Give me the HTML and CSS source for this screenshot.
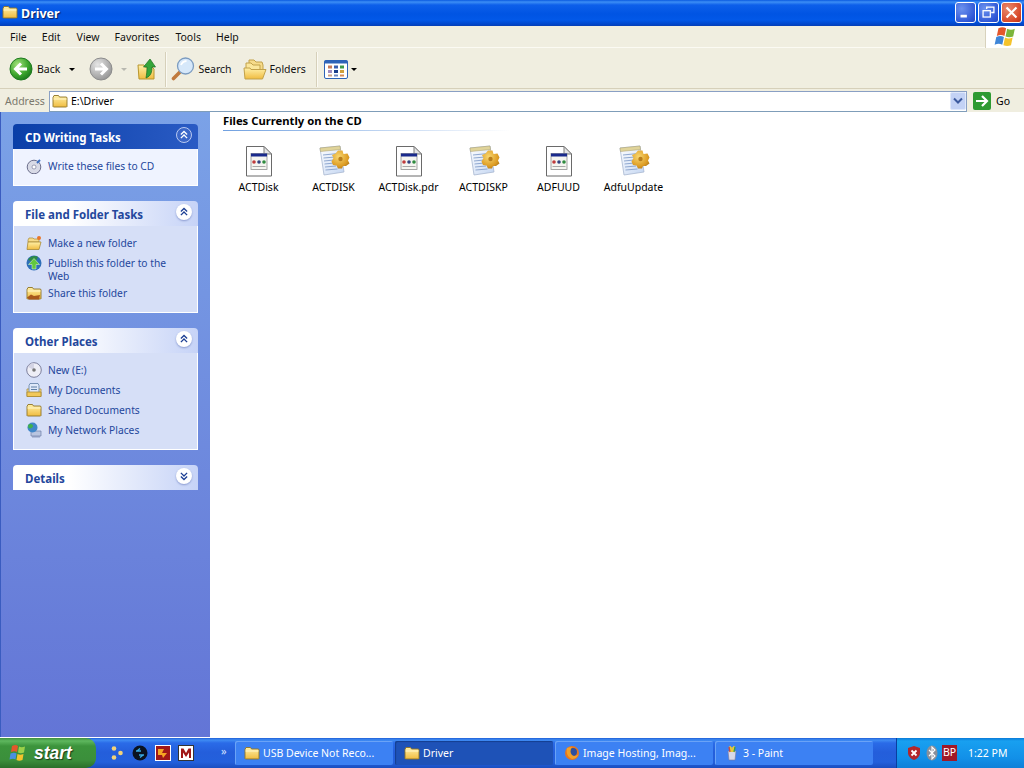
FILE: index.html
```html
<!DOCTYPE html>
<html lang="en">
<head>
<meta charset="utf-8">
<title>Driver</title>
<link rel="stylesheet" href="styles.css">
</head>
<body>
<svg class="defs" width="0" height="0" aria-hidden="true">
  <defs>
    <linearGradient id="gFolder" x1="0" y1="0" x2="0" y2="1"><stop offset="0" stop-color="#fff0a8"/><stop offset="1" stop-color="#f0bc40"/></linearGradient>
    <radialGradient id="gGreen" cx=".35" cy=".3" r=".8"><stop offset="0" stop-color="#a4e27c"/><stop offset=".6" stop-color="#3ba52c"/><stop offset="1" stop-color="#14701a"/></radialGradient>
    <radialGradient id="gGray" cx=".35" cy=".3" r=".8"><stop offset="0" stop-color="#e6e6e6"/><stop offset="1" stop-color="#8f8f8f"/></radialGradient>
    <linearGradient id="gPage" x1="0" y1="0" x2="1" y2="1"><stop offset="0" stop-color="#fff"/><stop offset="1" stop-color="#c4d6f2"/></linearGradient>
    <radialGradient id="gGold" cx=".4" cy=".35" r=".75"><stop offset="0" stop-color="#f8d770"/><stop offset=".7" stop-color="#dd9c24"/><stop offset="1" stop-color="#a8741a"/></radialGradient>
    <symbol id="folder" viewBox="0 0 16 16"><path d="M1 4.500 2 2.500h4.500l1 1.500h7l.5 1V13.500l-.5.500H1.500L1 13.500z" fill="url(#gFolder)" stroke="#8f7426" stroke-width=".9"/><path d="M1.500 6h13" stroke="#fff6c8" stroke-width="1"/></symbol>
    <symbol id="openfolder" viewBox="0 0 24 24"><path d="M6 3h5l2 2h6l1 3v5H6z" fill="#f6db8a" stroke="#c2a24a"/><path d="M3 6h5l2 2h7v5H3z" fill="#fbe79c" stroke="#c2a24a"/><path d="M2 22 1 11h6l1 1.500h15L19.500 22z" fill="url(#gFolder)" stroke="#c2a24a"/></symbol>
    <symbol id="doc" viewBox="0 0 32 32"><path d="M3.500 1.500H21L28.500 9v22h-25z" fill="#fff" stroke="#6a6a6a"/><path d="M21 1.500V9h7.500z" fill="#e4e4e4" stroke="#7d7d7d"/><rect x="8" y="8.500" width="16" height="16" fill="#f5f5f0" stroke="#909090" stroke-width=".8"/><rect x="8" y="8.500" width="16" height="3" fill="#1a2a8c"/><circle cx="11" cy="17" r="1.800" fill="#c03b3b"/><circle cx="16" cy="17" r="1.800" fill="#30407e"/><circle cx="21" cy="17" r="1.800" fill="#2f8b3f"/><path d="M9.500 21.500h13" stroke="#a8a8a8"/></symbol>
    <symbol id="cfg" viewBox="0 0 32 32"><path d="M2 3 22 1l4 26-20 3z" fill="url(#gPage)" stroke="#a8b8d0" stroke-width=".8"/><path d="M2 3 22 1l.5 3.500-20 2z" fill="#e0d49a" stroke="#a89c6a" stroke-width=".5"/><path d="M5 10l15-1.500M5.500 13l12-1M6 16l10-1M6.500 19l10-1M7 22l11-1M7.500 25l12-1" stroke="#8fa8d0"/><path d="M20 5.500h4.500l1 3.500 4-.5 2 4-1.500 3 1.500 3-3.500 2.500-3 0-1 2.500H20l-1.500-3-3.500-.5-1.500-3.500L15.500 13 14 10l3.500-1.500z" fill="url(#gGold)"/><circle cx="22.500" cy="14" r="2.200" fill="#b87e1c"/></symbol>
  </defs>
</svg>

<div class="window">
  <header class="titlebar">
    <svg class="ic16 title-icon"><use href="#folder"/></svg>
    <span class="title-text">Driver</span>
    <div class="winbtns">
      <span class="winbtn"><svg viewBox="0 0 21 21"><rect x="5" y="13" width="7" height="3" fill="#fff"/></svg></span>
      <span class="winbtn"><svg viewBox="0 0 21 21"><path d="M8.500 6.500V4.500h8v6h-3" fill="none" stroke="#fff" stroke-width="1.400"/><rect x="4.500" y="8.500" width="8" height="7" fill="none" stroke="#fff" stroke-width="1.400"/></svg></span>
      <span class="winbtn winbtn-close"><svg viewBox="0 0 21 21"><path d="M5 5l11 11M16 5 5 16" stroke="#fff" stroke-width="2.400"/></svg></span>
    </div>
  </header>

  <nav class="menubar">
    <span class="menu-item">File</span>
    <span class="menu-item">Edit</span>
    <span class="menu-item">View</span>
    <span class="menu-item">Favorites</span>
    <span class="menu-item">Tools</span>
    <span class="menu-item">Help</span>
    <span class="flag-box">
      <svg viewBox="0 0 22 22" width="24" height="24"><path d="M5 3c3-1.500 5-1 7 0l-1.500 7c-2-1-4-1.300-7 0z" fill="#e4572b"/><path d="M13 3.500c2.500 1.200 4.500 1.200 7 0L18.500 10.500c-2.500 1-4.500 1-7 0z" fill="#7cb53c"/><path d="M3 11c3-1.300 5-1 7 0L8.500 18c-2-1-4-1.300-7 0z" fill="#3f86d8"/><path d="M11 11.500c2.500 1.200 4.500 1.200 7 0L16.500 18.500c-2.500 1-4.500 1-7 0z" fill="#f5c32c"/></svg>
    </span>
  </nav>

  <div class="toolbar">
    <span class="tool tool-back">
      <svg class="ic24" viewBox="0 0 24 24"><circle cx="12" cy="12" r="11" fill="url(#gGreen)" stroke="#1e7a20"/><path d="M18 12H8M12 6.500 6.500 12l5.500 5.500" fill="none" stroke="#fff" stroke-width="3"/></svg>
      <span>Back</span>
      <i class="caret caret-back"></i>
    </span>
    <span class="tool tool-forward">
      <svg class="ic24" viewBox="0 0 24 24"><circle cx="12" cy="12" r="11" fill="url(#gGray)" stroke="#8c8c8c"/><path d="M6 12h10M12 6.500l5.500 5.500-5.500 5.500" fill="none" stroke="#fff" stroke-width="3"/></svg>
      <i class="caret caret-off"></i>
    </span>
    <span class="tool tool-up">
      <svg class="ic24" viewBox="0 0 24 24"><path d="M3 8h6l1 2h7l2 2v10H4z" fill="url(#gFolder)" stroke="#b8962e"/><path d="M11 21c5-2 6-6 6-11h3.500L15 2 8.500 10H12c0 4-.5 8-1 11z" fill="#35a63a" stroke="#1d6e22" stroke-width=".7"/></svg>
    </span>
    <i class="sep"></i>
    <span class="tool tool-search">
      <svg class="ic24" viewBox="0 0 24 24"><path d="M9.500 14.500 2.500 21.500" stroke="#c07a3e" stroke-width="3.600" stroke-linecap="round"/><circle cx="14.500" cy="9" r="8" fill="#d6e8fa" stroke="#7c9cc0" stroke-width="1.300"/><path d="M10 8c1-2.500 3-3.800 5.500-4" stroke="#fff" stroke-width="1.800" fill="none"/></svg>
      <span>Search</span>
    </span>
    <span class="tool tool-folders">
      <svg class="ic24" viewBox="0 0 24 24"><use href="#openfolder"/></svg>
      <span>Folders</span>
    </span>
    <i class="sep sep-views"></i>
    <span class="tool tool-views">
      <svg class="ic24" viewBox="0 0 24 24"><rect x=".5" y="3.500" width="23" height="18" rx="1.500" fill="#fff" stroke="#2d63b8"/><rect x=".5" y="3.500" width="23" height="3" fill="#2d63b8"/><path d="M4 8.500h4v3H4z" fill="#c77a5a"/><path d="M10 8.500h4v3h-4z" fill="#3a5fb0"/><path d="M16 8.500h4v3h-4z" fill="#3f9a4a"/><path d="M4 13h4v3H4z" fill="#a08cc0"/><path d="M10 13h4v3h-4z" fill="#1c3f8c"/><path d="M16 13h4v3h-4z" fill="#d0a03a"/><path d="M4 17.500h4v2H4z" fill="#d0a080"/><path d="M10 17.500h4v2h-4z" fill="#7088c0"/><path d="M16 17.500h4v2h-4z" fill="#d88a50"/></svg>
      <i class="caret"></i>
    </span>
  </div>

  <div class="addressbar">
    <span class="address-label">Address</span>
    <div class="address-field">
      <svg class="ic16"><use href="#folder"/></svg>
      <span class="address-value">E:\Driver</span>
      <span class="dropbtn"><svg viewBox="0 0 16 18" width="16" height="18"><path d="M4 6.500 8 10.500 12 6.500" fill="none" stroke="#3c5a9e" stroke-width="2"/></svg></span>
    </div>
    <span class="go">
      <svg viewBox="0 0 18 18" width="18" height="18"><rect width="18" height="18" rx="2" fill="#2e9a32"/><path d="M3 9h10M9 4l5 5-5 5" fill="none" stroke="#fff" stroke-width="2.200"/></svg>
      <span>Go</span>
    </span>
  </div>

  <main class="main">
    <aside class="sidebar">
      <section class="card">
        <h2 class="card-head card-head-primary"><span>CD Writing Tasks</span><i class="chev chev-primary"><svg viewBox="0 0 18 18"><path d="M5.500 8.500 9 5l3.500 3.500M5.500 12.500 9 9l3.500 3.500" fill="none" stroke="currentColor" stroke-width="1.500"/></svg></i></h2>
        <div class="card-body card-body-primary">
          <div class="row"><svg class="ic16" viewBox="0 0 16 16"><circle cx="8" cy="9" r="6.800" fill="#d8dae6" stroke="#6c6f8c"/><circle cx="8" cy="9" r="2" fill="#fff" stroke="#7c7f9c" stroke-width=".7"/><path d="M11 5l3-3" stroke="#3d6fc0" stroke-width="2"/></svg><span class="row-text">Write these files to CD</span></div>
        </div>
      </section>

      <section class="card">
        <h2 class="card-head"><span>File and Folder Tasks</span><i class="chev"><svg viewBox="0 0 18 18"><path d="M5.500 8.500 9 5l3.500 3.500M5.500 12.500 9 9l3.500 3.500" fill="none" stroke="currentColor" stroke-width="1.500"/></svg></i></h2>
        <div class="card-body">
          <div class="row"><svg class="ic16" viewBox="0 0 16 16"><path d="M2 5 3 3h4l1 1h5v3H2z" fill="#f6db8a" stroke="#a98a35" stroke-width=".7"/><path d="M1 14.500 2 7h13l-2 7.500z" fill="url(#gFolder)" stroke="#a98a35" stroke-width=".8"/><circle cx="13" cy="3" r="2" fill="#e8762a"/></svg><span class="row-text">Make a new folder</span></div>
          <div class="row"><svg class="ic16" viewBox="0 0 16 16"><circle cx="8" cy="8" r="7.500" fill="#2e6fb8"/><path d="M2 5c2-4 7-5 10-3l-2 4H5z" fill="#2e8a46"/><path d="M8 3.500l5.500 6H10V14H6V9.500H2.500z" fill="#62c83e" stroke="#e6ffd8" stroke-width=".5"/></svg><span class="row-text">Publish this folder to the Web</span></div>
          <div class="row"><svg class="ic16" viewBox="0 0 16 16"><use href="#folder"/><path d="M1 12.500l4-3 3 1.500 6-1-1 4.500H3z" fill="#a8581c"/></svg><span class="row-text">Share this folder</span></div>
        </div>
      </section>

      <section class="card">
        <h2 class="card-head"><span>Other Places</span><i class="chev"><svg viewBox="0 0 18 18"><path d="M5.500 8.500 9 5l3.500 3.500M5.500 12.500 9 9l3.500 3.500" fill="none" stroke="currentColor" stroke-width="1.500"/></svg></i></h2>
        <div class="card-body">
          <div class="row"><svg class="ic16" viewBox="0 0 16 16"><circle cx="8" cy="8" r="7.300" fill="#eeeef6" stroke="#7c7f9c"/><path d="M8 8 2 5a7 7 0 0 1 6-4z" fill="#d4d4e4"/><circle cx="8" cy="8" r="1.800" fill="#777"/></svg><span class="row-text">New (E:)</span></div>
          <div class="row"><svg class="ic16" viewBox="0 0 16 16"><path d="M1 7h14v7.500H1z" fill="url(#gFolder)" stroke="#a98a35" stroke-width=".8"/><path d="M4 1.500h8l1 2v8H3v-8z" fill="#dfe8f8" stroke="#5f7fa5" stroke-width=".8"/><path d="M5 5h6M5 7.500h6" stroke="#5f7fa5"/><path d="M1 10h14v4.500H1z" fill="#f2c858" stroke="#a98a35" stroke-width=".8"/></svg><span class="row-text">My Documents</span></div>
          <div class="row"><svg class="ic16"><use href="#folder"/></svg><span class="row-text">Shared Documents</span></div>
          <div class="row"><svg class="ic16" viewBox="0 0 16 16"><path d="M5 9h10v5H5z" fill="#b9c5e0" stroke="#6f7ea8" stroke-width=".7"/><path d="M6 14h8v1.500H6z" fill="#8f9cc0"/><circle cx="6.500" cy="5.500" r="5" fill="#3f86c8"/><path d="M2 3c2-2 5-1 5 1S4 7 2.500 6z" fill="#3fb04a"/></svg><span class="row-text">My Network Places</span></div>
        </div>
      </section>

      <section class="card">
        <h2 class="card-head"><span>Details</span><i class="chev"><svg viewBox="0 0 18 18"><path d="M5.500 5.500 9 9l3.500-3.500M5.500 9.500 9 13l3.500-3.500" fill="none" stroke="currentColor" stroke-width="1.500"/></svg></i></h2>
      </section>
    </aside>

    <section class="content">
      <h3 class="group-title">Files Currently on the CD</h3>
      <div class="files">
        <div class="file"><svg class="ic32"><use href="#doc"/></svg><span>ACTDisk</span></div>
        <div class="file"><svg class="ic32"><use href="#cfg"/></svg><span>ACTDISK</span></div>
        <div class="file"><svg class="ic32"><use href="#doc"/></svg><span>ACTDisk.pdr</span></div>
        <div class="file"><svg class="ic32"><use href="#cfg"/></svg><span>ACTDISKP</span></div>
        <div class="file"><svg class="ic32"><use href="#doc"/></svg><span>ADFUUD</span></div>
        <div class="file"><svg class="ic32"><use href="#cfg"/></svg><span>AdfuUpdate</span></div>
      </div>
    </section>
  </main>

  <footer class="taskbar">
    <span class="start">
      <svg viewBox="0 0 20 20" width="20" height="20"><path d="M3 3c3-1.500 4.500-1 6 0L8 9c-1.500-1-3-1.300-6 0z" fill="#e4572b"/><path d="M10 3.500c2 1 3.500 1 6 0L15 9.500c-2.500 1-4 1-6 0z" fill="#9bd04a"/><path d="M1.500 10.500c3-1.300 4.500-1 6 0l-1 6c-1.500-1-3-1.300-6 0z" fill="#4a90e0"/><path d="M8.500 11c2 1 3.500 1 6 0l-1 6c-2.500 1-4 1-6 0z" fill="#f5c32c"/></svg>
      <span class="start-text">start</span>
    </span>
    <div class="quick">
      <svg viewBox="0 0 16 16" width="16" height="16"><circle cx="5" cy="3.500" r="2.300" fill="#f2d27a"/><circle cx="11.500" cy="8" r="2.300" fill="#f2d27a"/><circle cx="5" cy="12.500" r="2.300" fill="#f2d27a"/></svg>
      <svg viewBox="0 0 16 16" width="16" height="16"><circle cx="8" cy="8" r="7.500" fill="#0a1220"/><path d="M4 6h5M7 10h5M8 3.500 5 6M8 12.500l3-2.500" stroke="#38a8e0" stroke-width="1.400" fill="none"/></svg>
      <svg viewBox="0 0 16 16" width="16" height="16"><rect x=".5" y=".5" width="15" height="15" fill="#a01818" stroke="#fff"/><path d="M3 4h6l-2 4h5l-4 5-1-3H3z" fill="#f5a623"/></svg>
      <svg viewBox="0 0 16 16" width="16" height="16"><rect x=".5" y=".5" width="15" height="15" fill="#fff" stroke="#333"/><path d="M3 13V3.500h2.500L8 8l2.500-4.500H13V13h-2V7.500L8 12 5 7.500V13z" fill="#a01818"/></svg>
      <span class="more">»</span>
    </div>
    <div class="tasks">
      <span class="task"><svg class="ic16"><use href="#folder"/></svg><span>USB Device Not Reco...</span></span>
      <span class="task task-active"><svg class="ic16"><use href="#folder"/></svg><span>Driver</span></span>
      <span class="task"><svg class="ic16" viewBox="0 0 16 16"><circle cx="8" cy="8" r="7" fill="#e8761e"/><circle cx="9" cy="7" r="4" fill="#2d4f9e"/><path d="M3 3c-1 4 0 9 5 11 4 0 6-3 7-6-1 3-5 4-7 2S6 5 8 2C6 2 4 3 3 3z" fill="#f2a12a"/></svg><span>Image Hosting, Imag...</span></span>
      <span class="task"><svg class="ic16" viewBox="0 0 16 16"><path d="M4 6h8l-1 9H5z" fill="#d9d9e8" stroke="#7a7a9a" stroke-width=".6"/><path d="M6 1l1 6M10 1 9 7M8 2v5" stroke-width="1.500" stroke="#e8c83a"/><path d="M5 2l1 5" stroke="#d04a3a" stroke-width="1.300"/><path d="M11 2l-1 5" stroke="#3aa04a" stroke-width="1.300"/></svg><span>3 - Paint</span></span>
    </div>
    <div class="tray">
      <svg viewBox="0 0 16 16" width="16" height="16"><path d="M8 1l6 2v5c0 3-3 6-6 7-3-1-6-4-6-7V3z" fill="#b3262c"/><path d="M5.500 5.500l5 5M10.500 5.500l-5 5" stroke="#fff" stroke-width="1.800"/></svg>
      <svg viewBox="0 0 12 16" width="12" height="16"><ellipse cx="6" cy="8" rx="5.500" ry="7.500" fill="#8a8f9a"/><path d="M3 5l6 6-3 3V2l3 3-6 6" fill="none" stroke="#fff" stroke-width="1.100"/></svg>
      <span class="bp">BP</span>
      <span class="clock">1:22 PM</span>
    </div>
  </footer>
</div>
</body>
</html>
```
FILE: styles.css
```css
* { box-sizing: border-box; }
html, body { margin: 0; padding: 0; }
body { width: 1024px; height: 768px; overflow: hidden; font-family: "Noto Sans", "DejaVu Sans", sans-serif; font-size: 10.5px; line-height: 13px; color: #000; }
.defs { position: absolute; }
svg { display: block; flex: none; }
i { font-style: normal; }
.ic16 { width: 16px; height: 16px; }
.ic24 { width: 24px; height: 24px; }
.ic32 { width: 32px; height: 32px; }

.window { width: 1024px; height: 768px; display: flex; flex-direction: column; }

.titlebar { height: 26px; display: flex; align-items: center; padding: 1px 2px 0 2px; color: #fff; background: linear-gradient(to bottom, #0a5ae0 0, #3c8ef5 2px, #0d5fea 5px, #0054e3 14px, #0258e8 20px, #0143c4 25px, #0a3fb0 26px); }
.title-icon { margin-top: -4px; }
.title-text { margin-left: 3px; font-size: 12.5px; font-weight: 700; text-shadow: 1px 1px 1px #0f1f5f; }
.winbtns { margin-left: auto; margin-top: -2px; display: flex; gap: 2px; }
.winbtn { width: 21px; height: 21px; border: 1px solid #fff; border-radius: 3px; background: radial-gradient(circle at 30% 30%, #6c92ee, #2e56d6 75%, #2347c0); }
.winbtn svg { width: 19px; height: 19px; }
.winbtn-close { background: radial-gradient(circle at 30% 30%, #e88a6e, #d8492a 70%, #b8321a); }

.menubar { height: 22px; display: flex; align-items: center; padding: 2px 0 0 4px; background: #f0eee0; border-bottom: 1px solid #fbfaf3; }
.menu-item { padding: 0 6px; margin-right: 3px; color: #111; }
.menu-item:nth-child(2) { margin-right: 4px; }
.menu-item:nth-child(4) { margin-right: 4px; }
.flag-box { margin-left: auto; margin-top: -2px; width: 39px; height: 22px; display: flex; align-items: center; justify-content: center; background: #fff; border-left: 1px solid #d8d2bd; }

.toolbar { height: 41px; display: flex; align-items: center; padding: 2px 0 0 9px; background: #f0eee0; border-bottom: 1px solid #d6d0ba; }
.tool { display: flex; align-items: center; color: #111; }
.tool-back span { margin-left: 4px; }
.caret { width: 0; height: 0; border-left: 3px solid transparent; border-right: 3px solid transparent; border-top: 3px solid #000; }
.caret-back { margin-left: 9px; }
.caret-off { margin-left: 8px; border-top-color: #b8b8b0; }
.tool-forward { margin-left: 14px; }
.tool-up { margin-left: 8px; }
.sep { height: 35px; margin-left: 6px; background: #d6d0ba; border-right: 1px solid #fbfaf3; width: 2px; }
.tool-search { margin-left: 4px; }
.tool-search span, .tool-folders span { margin-left: 3px; }
.tool-folders { margin-left: 11px; }
.sep-views { margin-left: 10px; }
.tool-views { margin-left: 6px; }
.tool-views .caret { margin-left: 3px; }

.addressbar { height: 23px; display: flex; align-items: center; padding: 1px 0 0 5px; background: #f0eee0; }
.address-label { width: 44px; color: #7a786c; }
.address-field { width: 918px; height: 21px; display: flex; align-items: center; padding-left: 2px; background: #fff; border: 1px solid #8aa0c4; border-bottom-color: #7f9db9; }
.address-value { margin-left: 3px; }
.dropbtn { margin-left: auto; width: 16px; height: 18px; background: #c3d2f5; border: 1px solid #dfe8fb; border-radius: 2px; }
.dropbtn svg { margin: -1px; }
.go { display: flex; align-items: center; gap: 5px; margin-left: 6px; }

.main { flex: 1; display: flex; min-height: 0; border-bottom: 1px solid #fff; }
.sidebar { width: 210px; padding: 12px 12px 0 12px; display: flex; flex-direction: column; gap: 15px; background: linear-gradient(to bottom, #7ba2e7, #6375d6); border-left: 1px solid #3a5cc0; }
.card-head { margin: 0; height: 25px; display: flex; align-items: center; justify-content: space-between; padding: 0 6px 0 12px; border-radius: 4px 4px 0 0; font-size: 11.5px; font-weight: 700; background: linear-gradient(to right, #fff 0, #fff 30%, #c6d3f7 100%); color: #24479c; }
.card-head span { padding-top: 2px; }
.card-head-primary { color: #fff; background: linear-gradient(to right, #0a3fa8, #2a5bc4); }
.chev { width: 16px; height: 16px; margin-top: -4px; border-radius: 50%; background: #fff; color: #1c3f94; box-shadow: 0 1px 2px #8a9bd0; }
.chev svg { width: 16px; height: 16px; }
.chev-primary { background: #3a66c8; color: #fff; border: 1px solid #b8c8f0; box-shadow: none; }
.chev-primary svg { margin: -1px; }
.card-body { padding: 9px 12px 11px 12px; display: flex; flex-direction: column; gap: 4px; background: #d6dff7; border: 1px solid #fff; border-top: 0; }
.card-body-primary { background: #eff3ff; }
.row { display: flex; align-items: flex-start; gap: 6px; min-height: 16px; color: #24479c; font-size: 10.25px; }
.row-text { padding-top: 2px; margin-bottom: -2px; }

.content { flex: 1; background: #fff; padding: 2px 0 0 13px; }
.group-title { margin: 0; width: 287px; height: 17px; font-size: 11.25px; font-weight: 700; border-bottom: 1px solid; border-image: linear-gradient(to right, #70a0e0, #fff) 1; }
.files { display: flex; margin-top: 14px; margin-left: -2px; }
.file { width: 75px; display: flex; flex-direction: column; align-items: center; gap: 4px; }

.taskbar { height: 30px; display: flex; align-items: center; color: #fff; background: linear-gradient(to bottom, #1f5fd8 0, #3f8cf3 2px, #2a6be8 5px, #245edb 14px, #2360dc 24px, #1a4ec0 30px); }
.start { width: 96px; height: 30px; display: flex; align-items: center; gap: 5px; padding-left: 9px; border-radius: 0 10px 10px 0; background: linear-gradient(to bottom, #3f8f3f 0, #5eb75e 3px, #3c943c 8px, #3b8f3b 22px, #2a6f2a 30px); }
.start-text { font-family: "Liberation Sans", sans-serif; font-size: 17.5px; font-style: italic; font-weight: 700; line-height: 20px; text-shadow: 1px 1px 1px #1a3a1a; }
.quick { width: 139px; display: flex; align-items: center; padding-left: 13px; gap: 7px; }
.more { margin-left: 20px; margin-top: -6px; color: #cfe0ff; font-size: 11px; }
.tasks { width: 661px; display: flex; gap: 2px; }
.task { width: 158px; height: 24px; display: flex; align-items: center; gap: 3px; padding-left: 9px; border-radius: 2px; background: #3c81f3; box-shadow: inset 1px 1px 0 #6aa3f7; color: #fff; }
.task-active { background: #1e52b7; box-shadow: inset 1px 1px 1px #143f90; }
.tray { flex: 1; height: 30px; display: flex; align-items: center; padding-left: 9px; gap: 4px; background: linear-gradient(to bottom, #0a7ad8 0, #18a0f0 3px, #1290e8 20px, #0f80d8 30px); border-left: 1px solid #0a3fa0; }
.bp { width: 15px; height: 16px; background: #a01828; text-align: center; line-height: 15px; }
.clock { margin-left: 7px; }
```
